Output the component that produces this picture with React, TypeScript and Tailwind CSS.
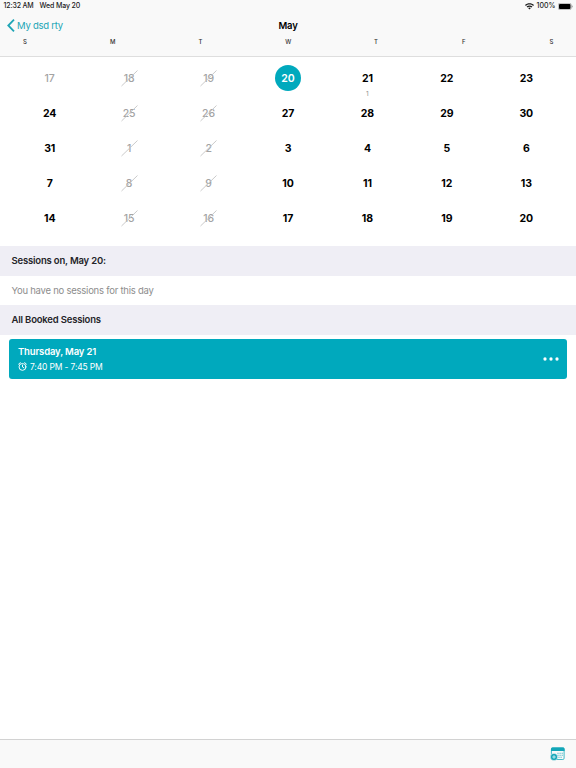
import clsx from "clsx";

type Day = {
  date: number;
  past?: boolean;
  unavailable?: boolean;
  selected?: boolean;
  sessions?: number;
};

const WEEKDAYS = ["S", "M", "T", "W", "T", "F", "S"];

const DAYS: Day[] = [
  { date: 17, past: true },
  { date: 18, unavailable: true },
  { date: 19, unavailable: true },
  { date: 20, selected: true },
  { date: 21, sessions: 1 },
  { date: 22 },
  { date: 23 },
  { date: 24 },
  { date: 25, unavailable: true },
  { date: 26, unavailable: true },
  { date: 27 },
  { date: 28 },
  { date: 29 },
  { date: 30 },
  { date: 31 },
  { date: 1, unavailable: true },
  { date: 2, unavailable: true },
  { date: 3 },
  { date: 4 },
  { date: 5 },
  { date: 6 },
  { date: 7 },
  { date: 8, unavailable: true },
  { date: 9, unavailable: true },
  { date: 10 },
  { date: 11 },
  { date: 12 },
  { date: 13 },
  { date: 14 },
  { date: 15, unavailable: true },
  { date: 16, unavailable: true },
  { date: 17 },
  { date: 18 },
  { date: 19 },
  { date: 20 },
];

const WifiIcon = () => (
  <svg width="9" height="7" viewBox="0 0 18 13" fill="currentColor">
    <path d="M9 0C5.500 0 2.400 1.300 0 3.500L1.900 5.400C3.800 3.700 6.200 2.700 9 2.700s5.200 1 7.100 2.700L18 3.500C15.600 1.300 12.500 0 9 0Z" />
    <path d="M9 4.400c-2.300 0-4.300.8-5.900 2.200L5 8.500c1.100-.9 2.500-1.500 4-1.500s2.900.6 4 1.500l1.900-1.900C13.300 5.200 11.300 4.400 9 4.400Z" />
    <path d="M9 8.700c-1.100 0-2 .4-2.800 1L9 12.700l2.800-3c-.8-.6-1.700-1-2.800-1Z" />
  </svg>
);

const BatteryIcon = () => (
  <svg width="15" height="7" viewBox="0 0 15 7">
    <rect x="0.300" y="0.300" width="12.900" height="6.400" rx="1.600" fill="none" stroke="#777" strokeWidth="0.500" />
    <rect x="1" y="1" width="11.500" height="5" rx="0.900" fill="#000" />
    <path d="M13.800 2.300c.5.200.8.600.8 1.200s-.3 1-.8 1.200Z" fill="#777" />
  </svg>
);

const AlarmIcon = () => (
  <svg width="9" height="9" viewBox="0 0 18 18" fill="none" stroke="currentColor" strokeWidth="1.900" strokeLinecap="round">
    <circle cx="9" cy="9.800" r="6.900" />
    <path d="M9 6v4l2.700 1.600M1.200 4.300 4.700 1.200M16.800 4.300l-3.500-3.100" />
  </svg>
);

const AddToCalendarIcon = () => (
  <svg width="15" height="14" viewBox="0 0 15 14" fill="none">
    <rect x="1.400" y="0.900" width="12.700" height="11.600" rx="1.300" stroke="#30b3c2" strokeWidth="0.900" />
    <path d="M1 4V2C1 1.100 1.700.5 2.500.5h10.600c.8 0 1.500.6 1.500 1.500v2Z" fill="#12a6b8" />
    <path
      d="M7.400 6.200h1.200m.9 0h1.200m.9 0h1.200M7.400 8.200h1.200m.9 0h1.200m.9 0h1.200M8.400 10.200h1.200m.9 0h1.200"
      stroke="#45b9c6"
      strokeWidth="1.100"
    />
    <circle cx="4" cy="10" r="3.600" fill="#12a6b8" stroke="#f9f9f9" strokeWidth="0.500" />
    <path d="M4 8.200v3.600M2.200 10h3.600" stroke="#e9fafb" strokeWidth="0.800" />
  </svg>
);

const DayCell = ({ day }: { day: Day }) => (
  <div className="relative flex h-[35px] items-center justify-center">
    <span
      className={clsx(
        "flex size-[26px] shrink-0 items-center justify-center rounded-full pt-px text-[10.500px] tracking-[-0.1px]",
        day.selected && "bg-[#00a9bd] font-semibold text-white",
        (day.past || day.unavailable) && "font-medium text-[#a3a3a3]",
        !day.selected && !day.past && !day.unavailable && "font-bold text-black",
      )}
    >
      {day.date}
    </span>
    {day.unavailable && (
      <svg className="absolute inset-0 m-auto" width="17" height="17" viewBox="0 0 17 17">
        <path d="M.5 16 16.500.5" stroke="#c4c4c4" strokeWidth="0.900" />
      </svg>
    )}
    {day.sessions && (
      <span className="absolute inset-x-0 top-[29.500px] text-center text-[6.500px] leading-[9px] text-[#8e8e8e]">
        {day.sessions}
      </span>
    )}
  </div>
);

const SectionTitle = ({ children }: { children: React.ReactNode }) => (
  <h2 className="flex h-[29.500px] items-center bg-[#efeef5] px-[11.500px] text-[9.500px] font-semibold tracking-[-0.18px] text-[#242429]">
    {children}
  </h2>
);

const App = () => {
  return (
    <div className="flex h-screen w-full flex-col overflow-hidden bg-white font-['Inter','Liberation_Sans',sans-serif]">
      <header className="h-[57px] shrink-0 border-b border-[#dedede] bg-[#f9f9f9]">
        <div className="flex h-3 items-center justify-between pl-[3.500px] pr-[3px] text-[7px] font-medium tracking-[-0.15px] text-[#1c1c1c]">
          <div className="flex gap-1.5">
            <span>12:32 AM</span>
            <span>Wed May 20</span>
          </div>
          <div className="flex items-center gap-[2.500px]">
            <WifiIcon />
            <span className="tracking-normal">100%</span>
            <BatteryIcon />
          </div>
        </div>
        <nav className="grid h-[26px] grid-cols-3 items-center px-[7px]">
          <button className="flex items-center gap-[2px] text-[9.500px] tracking-[-0.25px] text-[#20a5b5]">
            <svg width="8" height="13" viewBox="0 0 8 13" fill="none" stroke="currentColor" strokeWidth="1.800">
              <path d="M7 .7 1.300 6.500 7 12.300" />
            </svg>
            <span className="pt-0.5">My dsd rty</span>
          </button>
          <h1 className="pt-0.5 text-center text-[9.500px] font-semibold tracking-[-0.15px] text-black">May</h1>
        </nav>
        <div className="flex h-1.5 items-center justify-between px-5 pr-[19.500px] text-[6px] font-medium text-[#333]">
          {WEEKDAYS.map((weekday, index) => (
            <span key={index} className="w-2.5 text-center">
              {weekday}
            </span>
          ))}
        </div>
      </header>

      <main className="flex-1">
        <div className="grid h-[189px] grid-cols-7 content-start px-2.5 pt-[3.500px]">
          {DAYS.map((day, index) => (
            <DayCell key={index} day={day} />
          ))}
        </div>
        <SectionTitle>Sessions on, May 20:</SectionTitle>
        <p className="flex h-[29.500px] items-center px-[11.500px] pt-px text-[9.500px] tracking-[-0.24px] text-[#8d8d8d]">
          You have no sessions for this day
        </p>
        <SectionTitle>All Booked Sessions</SectionTitle>
        <div className="mx-[9px] mt-[4.500px] flex h-[39.500px] items-center justify-between rounded-[3px] bg-[#00a9bd] pl-[9px] pr-2 text-white">
          <div className="pt-px">
            <p className="text-[9.500px] font-semibold leading-[15px] tracking-[-0.15px]">Thursday, May 21</p>
            <p className="flex items-center gap-[3px] text-[8.500px] leading-[15px] tracking-[-0.15px]">
              <AlarmIcon />
              <span className="pt-px">7:40 PM - 7:45 PM</span>
            </p>
          </div>
          <button aria-label="Session options">
            <svg width="16" height="4" viewBox="0 0 16 4" fill="currentColor">
              <circle cx="2" cy="2" r="1.650" />
              <circle cx="8" cy="2" r="1.650" />
              <circle cx="14" cy="2" r="1.650" />
            </svg>
          </button>
        </div>
      </main>

      <footer className="flex h-[29px] shrink-0 items-center justify-end border-t border-[#d2d2d2] bg-[#f9f9f9] pr-[11px]">
        <button aria-label="Add to calendar">
          <AddToCalendarIcon />
        </button>
      </footer>
    </div>
  );
};

export default App;
